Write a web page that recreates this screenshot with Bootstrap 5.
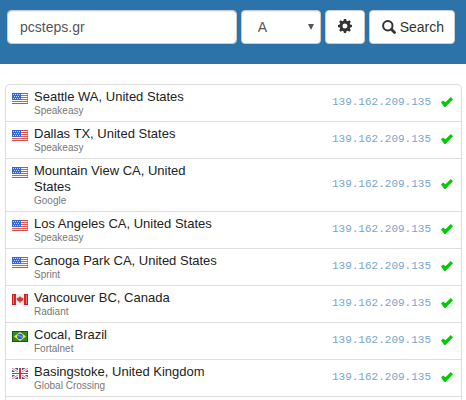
<!DOCTYPE html>
<html lang="en">
<head>
<meta charset="utf-8">
<meta name="viewport" content="width=device-width, initial-scale=1">
<title>DNS Checker</title>
<link href="https://cdn.jsdelivr.net/npm/bootstrap@5.3.0/dist/css/bootstrap.min.css" rel="stylesheet">
<style>
body { font-family: "Liberation Sans", Arial, sans-serif; color: #333; background: #fff; overflow: hidden; }
.topbar { background: #2b73a8; padding: 10px 11px 20px 7px; gap: 4px; }
.topbar .form-control, .topbar .form-select, .topbar .btn {
  height: 34px; font-size: 14px; line-height: 20px; border: 1px solid #ccc; border-radius: 4px; background-color: #fff;
}
.topbar .form-control, .topbar .form-select { color: #555; box-shadow: inset 0 1px 1px rgba(0,0,0,.08); }
.topbar .form-control { padding: 6px 12px; min-width: 0; }
.topbar .form-select {
  width: 80px; flex: none; padding: 6px 24px 6px 16px;
  background-image: url("data:image/svg+xml,%3Csvg xmlns='http://www.w3.org/2000/svg' viewBox='0 0 8 6'%3E%3Cpath fill='%23555' d='M1 0h6L4 6z'/%3E%3C/svg%3E");
  background-size: 8px 6px; background-position: right 5px center;
}
.topbar .btn { color: #333; padding: 6px 10px 6px 12px; flex: none; }
.topbar .gear { width: 40px; padding: 8px 12px 10px; }
.results { margin: 20px 4px 0 5px; border: 1px solid #ddd; border-bottom: 0; border-radius: 5px 5px 0 0; }
.results table { font-size: 13px; line-height: 16px; color: #333; }
.results tr { border-bottom: 1px solid #ddd; }
.results td { padding: 4px 0; vertical-align: middle; }
.results .flag { width: 28px; padding: 8px 0 0 6px; vertical-align: top; line-height: 0; }
.place { max-width: 190px; color: #222; }
.isp { font-size: 10px; line-height: 12px; color: #777; }
.results .ip { font-family: "Liberation Mono", "Courier New", monospace; font-size: 11px; color: #77a5ca; text-align: right; padding-bottom: 6px; }
.results .status { width: 30px; padding: 4px 0 6px 10px; line-height: 0; }
</style>
<script src="https://cdn.jsdelivr.net/npm/bootstrap@5.3.0/dist/js/bootstrap.bundle.min.js"></script>
</head>
<body class="d-flex flex-column min-vh-100">
<svg width="0" height="0" class="position-absolute" aria-hidden="true">
  <symbol id="us" viewBox="0 0 16 11">
    <path fill="#fff4f0" d="M0 0h16v11H0z"/>
    <path fill="#e8584c" d="M0 0h16v1H0zM0 2h16v1H0zM0 4h16v1H0zM0 6h16v1H0zM0 8h16v1H0zM0 10h16v1H0z"/>
    <path fill="#3568d4" d="M0 0h9v7H0z"/>
    <path fill="#c5d8ff" d="M1 1h1v1H1zM3 1h1v1H3zM5 1h1v1H5zM7 1h1v1H7zM2 3h1v1H2zM4 3h1v1H4zM6 3h1v1H6zM1 5h1v1H1zM3 5h1v1H3zM5 5h1v1H5zM7 5h1v1H7z"/>
    <path fill="none" stroke="#a64a4a" stroke-opacity=".45" d="M9 .5h6.500v10H0"/>
  </symbol>
  <symbol id="ca" viewBox="0 0 16 11">
    <path fill="#f4eeee" d="M0 0h16v11H0z"/>
    <path fill="#c41e1e" d="M0 0h4v11H0zM12 0h4v11h-4z"/>
    <path fill="#ee7474" d="M1 1h2v9H1zM13 1h2v9h-2z"/>
    <path fill="#d92222" d="M2 1h2v9H2zM12 1h2v9h-2z"/>
    <path fill="#dc3434" d="M8 2l1 1.500h1l1.500 1-.5 1.500-1.500 1.500h-1V9h-1V7.500h-1L5 6l-.5-1.500L6 3.500h1z"/>
  </symbol>
  <symbol id="br" viewBox="0 0 16 11">
    <path fill="#145c14" d="M0 0h16v11H0z"/>
    <path fill="#2c8c24" d="M1 1h14v9H1z"/>
    <path fill="#f0e83a" d="M8 1l6 4.500L8 10 2 5.500z"/>
    <circle cx="8" cy="5.500" r="2.800" fill="#2858c8"/>
    <path stroke="#98c0f0" fill="none" d="M5.700 4.700q2.500-.3 4.500 1.700"/>
  </symbol>
  <symbol id="gb" viewBox="0 0 16 11">
    <path fill="#33569f" d="M0 0h16v11H0z"/>
    <path stroke="#fff" stroke-width="2.800" d="M0 0l16 11M16 0L0 11"/>
    <path stroke="#e0606a" stroke-width=".9" d="M0 0l16 11M16 0L0 11"/>
    <path fill="#fff" d="M6 0h4v11H6zM0 4h16v3H0z"/>
    <path fill="#d92e38" d="M7 0h2v11H7zM0 5h16v1H0z"/>
  </symbol>
  <symbol id="ok" viewBox="0 0 12 10">
    <path fill="#0c0" d="M0 5.500L2 3.500l2.500 1.700L9.800 0 12 2.200 4.500 10H3.300z"/>
  </symbol>
</svg>

<form class="topbar d-flex" onsubmit="return false">
  <input type="text" class="form-control flex-fill" aria-label="Domain" value="pcsteps.gr">
  <select class="form-select" aria-label="Record type"><option>A</option><option>MX</option><option>NS</option></select>
  <button type="button" class="btn gear" aria-label="Settings"><svg width="14" height="14" viewBox="0 0 14 14" class="d-block"><path fill="#333" fill-rule="evenodd" d="M5.900 0h2.200l.4 1.800 1.200.5 1.600-1 1.500 1.500-1 1.600.5 1.200 1.700.3v2.200l-1.700.3-.5 1.200 1 1.600-1.500 1.500-1.600-1-1.200.5L8.100 14H5.900l-.4-1.800-1.200-.5-1.600 1-1.500-1.500 1-1.600-.5-1.200L0 8.100V5.900l1.700-.3.500-1.200-1-1.600 1.500-1.500 1.600 1 1.200-.5zM7 4.500a2.500 2.500 0 1 0 0 5 2.500 2.500 0 0 0 0-5z"/></svg></button>
  <button type="submit" class="btn d-flex align-items-center gap-1"><svg width="14" height="14" viewBox="0 0 14 14" aria-hidden="true"><circle cx="5.800" cy="5.800" r="4.700" fill="none" stroke="#333" stroke-width="2"/><path stroke="#333" stroke-width="2.800" stroke-linecap="round" d="M9.600 9.600l2.900 2.900"/></svg>Search</button>
</form>

<main class="results flex-grow-1">
  <table class="w-100">
    <tbody>
      <tr><td class="flag"><svg width="16" height="11" role="img" aria-label="US"><use href="#us"/></svg></td><td><div class="place">Seattle WA, United States</div><div class="isp">Speakeasy</div></td><td class="ip">139.162.209.135</td><td class="status"><svg width="12" height="10" role="img" aria-label="Resolved"><use href="#ok"/></svg></td></tr>
      <tr><td class="flag"><svg width="16" height="11" role="img" aria-label="US"><use href="#us"/></svg></td><td><div class="place">Dallas TX, United States</div><div class="isp">Speakeasy</div></td><td class="ip">139.162.209.135</td><td class="status"><svg width="12" height="10" role="img" aria-label="Resolved"><use href="#ok"/></svg></td></tr>
      <tr><td class="flag"><svg width="16" height="11" role="img" aria-label="US"><use href="#us"/></svg></td><td><div class="place">Mountain View CA, United States</div><div class="isp">Google</div></td><td class="ip">139.162.209.135</td><td class="status"><svg width="12" height="10" role="img" aria-label="Resolved"><use href="#ok"/></svg></td></tr>
      <tr><td class="flag"><svg width="16" height="11" role="img" aria-label="US"><use href="#us"/></svg></td><td><div class="place">Los Angeles CA, United States</div><div class="isp">Speakeasy</div></td><td class="ip">139.162.209.135</td><td class="status"><svg width="12" height="10" role="img" aria-label="Resolved"><use href="#ok"/></svg></td></tr>
      <tr><td class="flag"><svg width="16" height="11" role="img" aria-label="US"><use href="#us"/></svg></td><td><div class="place">Canoga Park CA, United States</div><div class="isp">Sprint</div></td><td class="ip">139.162.209.135</td><td class="status"><svg width="12" height="10" role="img" aria-label="Resolved"><use href="#ok"/></svg></td></tr>
      <tr><td class="flag"><svg width="16" height="11" role="img" aria-label="Canada"><use href="#ca"/></svg></td><td><div class="place">Vancouver BC, Canada</div><div class="isp">Radiant</div></td><td class="ip">139.162.209.135</td><td class="status"><svg width="12" height="10" role="img" aria-label="Resolved"><use href="#ok"/></svg></td></tr>
      <tr><td class="flag"><svg width="16" height="11" role="img" aria-label="Brazil"><use href="#br"/></svg></td><td><div class="place">Cocal, Brazil</div><div class="isp">Fortalnet</div></td><td class="ip">139.162.209.135</td><td class="status"><svg width="12" height="10" role="img" aria-label="Resolved"><use href="#ok"/></svg></td></tr>
      <tr><td class="flag"><svg width="16" height="11" role="img" aria-label="UK"><use href="#gb"/></svg></td><td><div class="place">Basingstoke, United Kingdom</div><div class="isp">Global Crossing</div></td><td class="ip">139.162.209.135</td><td class="status"><svg width="12" height="10" role="img" aria-label="Resolved"><use href="#ok"/></svg></td></tr>
    </tbody>
  </table>
</main>
</body>
</html>
